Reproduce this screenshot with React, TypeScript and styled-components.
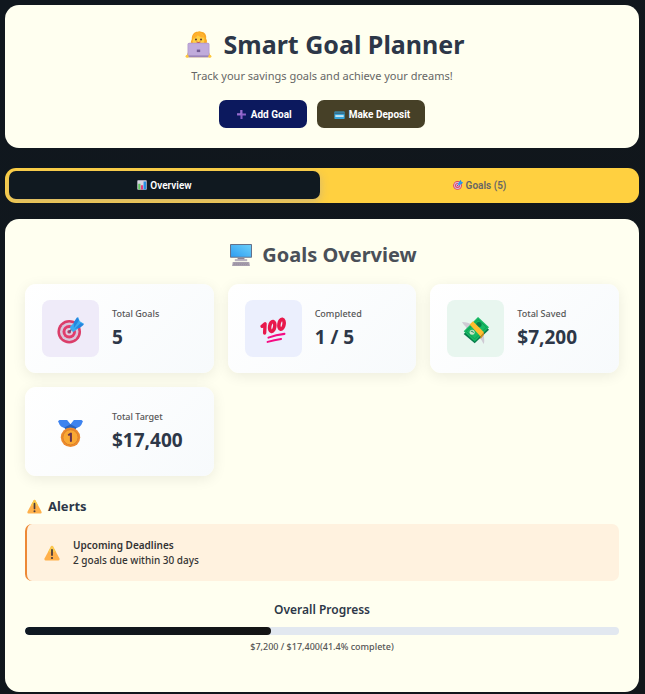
import React from "react";
import styled, { createGlobalStyle } from "styled-components";

const GlobalStyle = createGlobalStyle`
  *, *::before, *::after { box-sizing: border-box; }
  html { background: #120d18; }
  body {
    margin: 0;
    color: #2d3748;
    font-family: "Noto Sans", "Open Sans", sans-serif;
    background: linear-gradient(135deg, #10171e 0%, #11161a 100%);
  }
  h1, h2, h3, h4, p { margin: 0; }
`;

const Page = styled.main`
  display: flex;
  flex-direction: column;
  padding: 5px 6px 2px 5px;
`;

const Panel = styled.section`
  background: #fffff0;
  border-radius: 14px;
  padding: 20px;
`;

const Header = styled(Panel).attrs({ as: "header" })`
  display: flex;
  flex-direction: column;
  align-items: center;
  margin-bottom: 20px;
`;

const Title = styled.h1`
  display: flex;
  align-items: center;
  gap: 12px;
  padding-left: 5px;
  font-size: 25px;
  line-height: 38px;
  font-weight: 700;
`;

const Subtitle = styled.p`
  font-size: 11px;
  line-height: 20px;
  padding-top: 3px;
  color: #666;
  margin-bottom: 14px;
`;

const Actions = styled.div`
  display: flex;
  gap: 10px;
`;

const ActionButton = styled.button<{ $tone: string }>`
  display: flex;
  align-items: center;
  gap: 4px;
  height: 28px;
  padding: 0 15px 0 17px;
  border: 0;
  border-radius: 7px;
  background: ${(p) => p.$tone};
  color: #fff;
  font: 700 10px Roboto, sans-serif;
  cursor: pointer;
`;

const Tabs = styled.nav`
  display: flex;
  gap: 4px;
  padding: 3px 4px 4px;
  margin-bottom: 16px;
  border-radius: 11px;
  background: #ffd040;
  overflow: hidden;
`;

const Tab = styled.button<{ $active?: boolean }>`
  flex: 1;
  display: flex;
  align-items: center;
  justify-content: center;
  gap: 3px;
  height: 28px;
  padding: 0;
  border: 0;
  border-radius: 7px;
  background: ${(p) => (p.$active ? "#101920" : "transparent")};
  box-shadow: ${(p) => (p.$active ? "0 3px 10px rgba(102, 126, 234, 0.3)" : "none")};
  color: ${(p) => (p.$active ? "#fff" : "#666")};
  font: 600 10px Roboto, sans-serif;
  cursor: pointer;
`;

const Overview = styled(Panel)`
  padding-bottom: 37px;
`;

const OverviewTitle = styled.h2`
  display: flex;
  align-items: center;
  justify-content: center;
  gap: 10px;
  padding-left: 3px;
  margin-bottom: 14px;
  font-size: 20px;
  line-height: 31px;
  color: #4a5058;
`;

const Cards = styled.div`
  display: grid;
  grid-template-columns: repeat(auto-fill, minmax(160px, 1fr));
  gap: 14px;
`;

const Card = styled.article`
  display: flex;
  align-items: center;
  gap: 13px;
  padding: 16px 17px;
  border-radius: 11px;
  background: linear-gradient(135deg, #fff 0%, #f7fafc 100%);
  box-shadow: 0 3px 14px rgba(0, 0, 0, 0.08);
`;

const CardIcon = styled.div<{ $tone: string }>`
  flex: none;
  display: grid;
  place-items: center;
  width: 57px;
  height: 57px;
  padding-top: 3px;
  border-radius: 8px;
  background: ${(p) => p.$tone};
`;

const CardText = styled.div`
  padding-top: 1px;
`;

const CardLabel = styled.h3`
  font-size: 9px;
  line-height: 16px;
  font-weight: 500;
  color: #555;
`;

const CardValue = styled.p`
  font-size: 19px;
  line-height: 30px;
  font-weight: 700;
`;

const AlertsTitle = styled.h3`
  display: flex;
  align-items: center;
  gap: 6px;
  margin: 20px 0 8px;
  padding-left: 2px;
  font-size: 13px;
  line-height: 20px;
`;

const Alert = styled.div`
  display: flex;
  align-items: center;
  gap: 13px;
  padding: 13px 17px;
  border-left: 2px solid #ed8936;
  border-radius: 7px;
  background: #fff2df;
  color: #333;
  font-size: 10px;
  line-height: 15px;
  font-weight: 500;
`;

const AlertName = styled.h4`
  font-size: 10px;
  line-height: 16px;
  font-weight: 600;
`;

const Progress = styled.div`
  display: flex;
  flex-direction: column;
  align-items: center;
  margin-top: 20px;
`;

const ProgressTitle = styled.h3`
  margin-bottom: 8px;
  font-size: 12px;
  line-height: 18px;
  font-weight: 600;
`;

const Track = styled.div`
  width: 100%;
  height: 8px;
  border-radius: 4px;
  background: #e2e8f0;
  overflow: hidden;
`;

const Fill = styled.div`
  height: 100%;
  border-radius: 4px;
  background: linear-gradient(135deg, #0f1923 0%, #141414 100%);
`;

const ProgressText = styled.p`
  margin-top: 4px;
  font-size: 9px;
  line-height: 16px;
  font-weight: 500;
  color: #555;
`;

type IconProps = { size: number };

const Technologist = ({ size }: IconProps) => (
  <svg width={size} height={size} viewBox="0 0 32 32" aria-hidden="true">
    <path d="M2 31c0-6 4-10 10-10h8c6 0 10 4 10 10z" fill="#f7c23b" />
    <path d="M8 16c-2-2-1-4 0-6C8 4 11 1 15 1c1-1 3-1 4 0 4 0 7 4 6 8 2 3 1 6-1 8-4 2-12 2-16-1z" fill="#f9a825" />
    <path d="M10 8c0-3 3-6 6-6 4 0 7 3 7 7v2c0 4-3 7-7 7s-7-3-7-6z" fill="#ffd044" />
    <path d="M9 9c3 0 5-2 6-4 2 2 5 3 8 3-1-4-4-6-7-6-4 0-7 3-7 7z" fill="#ffb02e" />
    <circle cx="13" cy="10" r="1.2" fill="#5c3b35" />
    <circle cx="19" cy="10" r="1.2" fill="#5c3b35" />
    <path d="M14 13q2 1.5 4 0" stroke="#c13c3c" strokeWidth="1.2" fill="none" strokeLinecap="round" />
    <rect x="3" y="14" width="26" height="17" rx="2" fill="#b39bd0" />
    <rect x="4" y="15" width="24" height="14" rx="1" fill="#c0abdb" />
    <path d="M3 29h26v2H3z" fill="#9b84b8" />
    <path d="M14 22h4v3h-4z" fill="#705a91" />
    <circle cx="2.5" cy="30" r="1.8" fill="#ffc83d" />
    <circle cx="29.5" cy="30" r="1.8" fill="#ffc83d" />
  </svg>
);

const Plus = ({ size }: IconProps) => (
  <svg width={size} height={size} viewBox="0 0 32 32" aria-hidden="true">
    <path d="M13 3h6v10h10v6H19v10h-6V19H3v-6h10z" fill="#8b5fc7" />
    <path d="M13 3h3v13H3v-3h10z" fill="#a47bd8" />
  </svg>
);

const BankCard = ({ size }: IconProps) => (
  <svg width={size} height={size} viewBox="0 0 32 32" aria-hidden="true">
    <rect x="1" y="7" width="30" height="22" rx="2" fill="#35a5dc" />
    <path d="M1 10h30v4H1z" fill="#3a6075" />
    <path d="M4 18h24v5H4z" fill="#d6edf6" />
  </svg>
);

const Chart = ({ size }: IconProps) => (
  <svg width={size} height={size} viewBox="0 0 32 32" aria-hidden="true">
    <rect x="1" y="1" width="30" height="30" rx="2" fill="#d9d5e3" />
    <path d="M4 12h7v18H4z" fill="#61c760" />
    <path d="M12.5 17h7v13h-7z" fill="#e83b78" />
    <path d="M21 5h8v25h-8z" fill="#278fe3" />
  </svg>
);

const Target = ({ size }: IconProps) => (
  <svg width={size} height={size} viewBox="0 0 32 32" aria-hidden="true">
    <circle cx="14.5" cy="17.5" r="14" fill="#db3d69" />
    <circle cx="14.5" cy="17.5" r="11" fill="#d7c6dc" />
    <circle cx="14.5" cy="17.5" r="8" fill="#e13c6c" />
    <circle cx="14.5" cy="17.5" r="4.5" fill="#dfcfe2" />
    <circle cx="14.5" cy="17.5" r="2.2" fill="#b43b66" />
    <path d="M14.5 17.5 24 8" stroke="#50607c" strokeWidth="1.6" />
    <path d="M15 12l6-6 4-6 2 5 5 3-5 4-8 6z" fill="#3aaaf0" />
    <path d="m20 6 4-6 2 4-6 9zM23 12l5-5 4 2-5 4-6 1z" fill="#2486df" />
  </svg>
);

const Computer = ({ size }: IconProps) => (
  <svg width={size} height={size} viewBox="0 0 32 32" aria-hidden="true">
    <defs>
      <linearGradient id="screen" x1="0" y1="1" x2="1" y2="0">
        <stop offset="0" stopColor="#2f9df1" />
        <stop offset="1" stopColor="#6bd0fb" />
      </linearGradient>
    </defs>
    <rect x="0" y="0" width="32" height="20" rx="1" fill="#65718a" />
    <rect x="1.5" y="1.5" width="29" height="17" fill="url(#screen)" />
    <path d="M11 20h10v4H11z" fill="#8b8394" />
    <path d="M7 22h18v3H7z" fill="#b9b2bf" />
    <path d="M4 26h24l1 6H3z" fill="#aaa1b0" />
    <path d="M6 28h20M5 30h22" stroke="#877e91" strokeWidth=".8" strokeDasharray="2 1" />
  </svg>
);

const Hundred = ({ size }: IconProps) => (
  <svg width={size} height={size} viewBox="0 0 32 32" aria-hidden="true">
    <g fill="none" stroke="#e8184b">
      <path d="m2.5 11 3.5-3-.5 11" strokeWidth="4" strokeLinejoin="round" strokeLinecap="round" />
      <ellipse cx="14.5" cy="11.2" rx="3" ry="6" strokeWidth="4.2" transform="rotate(10 14.5 11.2)" />
      <ellipse cx="25.5" cy="8.5" rx="3" ry="6" strokeWidth="4.2" transform="rotate(10 25.5 8.5)" />
    </g>
    <g fill="none" stroke="#f50b83" strokeLinecap="round" strokeWidth="2.4">
      <path d="M10 24.5q9-3.5 19-4.5" />
      <path d="M9 29.5q8-2.5 16-3.5" />
    </g>
  </svg>
);

const FlyingMoney = ({ size }: IconProps) => (
  <svg width={size} height={size} viewBox="0 0 32 32" aria-hidden="true">
    <path d="M0 6c5 0 9 1 12 4l-5 6C5 14 5 11 3 10 2 9 1 8 0 6z" fill="#cfcbd4" />
    <path d="M25 19c1 4 2 8 1 13-2-2-2-4-4-6l-3-2z" fill="#cfcbd4" />
    <path d="M2 20 20 3l12 12-17 16z" fill="#087b4b" />
    <path d="M2 17 19 0l13 12-17 17z" fill="#18ba64" />
    <path d="M5 17 19 3l10 9-14 14z" fill="none" stroke="#0b9952" />
    <circle cx="20" cy="9" r="3.2" fill="#087d48" />
    <circle cx="12" cy="18" r="3" fill="#c9e6c7" />
    <path d="M10.5 17q3-1 3 2" stroke="#118252" fill="none" />
    <path d="m9 9 4-4 13 13-4 5z" fill="#ffbd2e" />
    <path d="m22 23 4-5v3l-4 5z" fill="#d98b1c" />
  </svg>
);

const Medal = ({ size }: IconProps) => (
  <svg width={size} height={size} viewBox="0 0 32 32" aria-hidden="true">
    <path d="M3 0h9l4 5 4-5h9c2 1 2 2 1 3-1 4-4 6-8 7H10C6 9 3 7 2 3 1 2 1 1 3 0z" fill="#3e83ef" />
    <path d="m9 9 7-4 7 4-2 4H11z" fill="#2b63bd" />
    <circle cx="16" cy="20.5" r="11.5" fill="#ed8b2f" />
    <circle cx="16" cy="20.5" r="9" fill="#f9a834" stroke="#d97b2a" />
    <path d="m14 17.5 2.5-1.5v9" fill="none" stroke="#67334d" strokeWidth="2.4" strokeLinejoin="round" strokeLinecap="round" />
  </svg>
);

const Warning = ({ size }: IconProps) => (
  <svg width={size} height={size} viewBox="0 0 32 32" aria-hidden="true">
    <path d="M14 3q2-3 4 0l13 24q1 4-2 4H3q-3 0-2-4z" fill="#ffb04a" />
    <path d="M14 3q2-3 4 0l6 11H8z" fill="#fac94d" />
    <path d="M16 10v10" stroke="#493b3d" strokeWidth="3.6" strokeLinecap="round" />
    <circle cx="16" cy="26" r="2.2" fill="#493b3d" />
  </svg>
);

const stats = [
  { label: "Total Goals", value: "5", tone: "#efebf9", Icon: Target },
  { label: "Completed", value: "1 / 5", tone: "#ebeffd", Icon: Hundred },
  { label: "Total Saved", value: "$7,200", tone: "#e8f6ef", Icon: FlyingMoney },
  { label: "Total Target", value: "$17,400", tone: "transparent", Icon: Medal },
];

const percent = 41.4;

export default function App() {
  return (
    <>
      <GlobalStyle />
      <Page>
        <Header>
          <Title>
            <Technologist size={27} />
            Smart Goal Planner
          </Title>
          <Subtitle>Track your savings goals and achieve your dreams!</Subtitle>
          <Actions>
            <ActionButton $tone="#0c195e">
              <Plus size={11} />
              Add Goal
            </ActionButton>
            <ActionButton $tone="#464027">
              <BankCard size={11} />
              Make Deposit
            </ActionButton>
          </Actions>
        </Header>

        <Tabs>
          <Tab $active>
            <Chart size={10} />
            Overview
          </Tab>
          <Tab>
            <Target size={10} />
            Goals (5)
          </Tab>
        </Tabs>

        <Overview>
          <OverviewTitle>
            <Computer size={22} />
            Goals Overview
          </OverviewTitle>
          <Cards>
            {stats.map(({ label, value, tone, Icon }) => (
              <Card key={label}>
                <CardIcon $tone={tone}>
                  <Icon size={27} />
                </CardIcon>
                <CardText>
                  <CardLabel>{label}</CardLabel>
                  <CardValue>{value}</CardValue>
                </CardText>
              </Card>
            ))}
          </Cards>

          <AlertsTitle>
            <Warning size={15} />
            Alerts
          </AlertsTitle>
          <Alert>
            <Warning size={16} />
            <div>
              <AlertName>Upcoming Deadlines</AlertName>
              <p>2 goals due within 30 days</p>
            </div>
          </Alert>

          <Progress>
            <ProgressTitle>Overall Progress</ProgressTitle>
            <Track role="progressbar" aria-label="Overall Progress" aria-valuenow={percent}>
              <Fill style={{ width: `${percent}%` }} />
            </Track>
            <ProgressText>$7,200 / $17,400({percent}% complete)</ProgressText>
          </Progress>
        </Overview>
      </Page>
    </>
  );
}
